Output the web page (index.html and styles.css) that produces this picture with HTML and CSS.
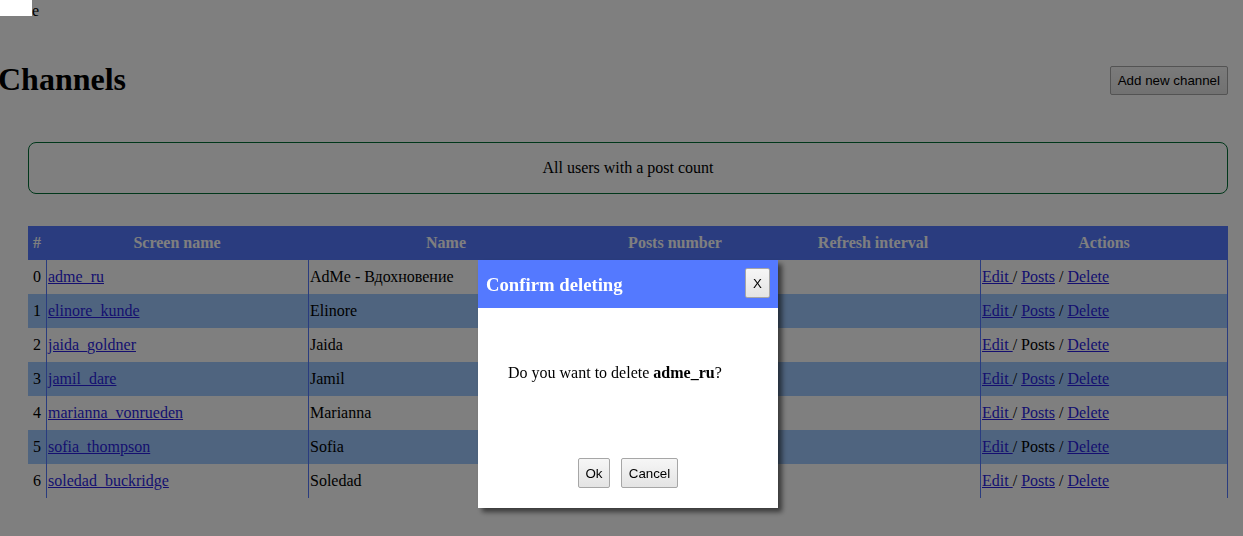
FILE: index.html
```html
<!DOCTYPE html>
<html lang="en">
<head>
<meta charset="utf-8">
<title>Channels</title>
<link rel="stylesheet" href="styles.css">
</head>
<body>
<div class="topline">Home</div>
<div class="corner-box"></div>
<main class="page">
  <header class="page-header">
    <h1 class="title">Channels</h1>
    <button class="btn btn-add">Add new channel</button>
  </header>
  <div class="content">
    <div class="info">All users with a post count</div>
    <table class="channels">
      <colgroup>
        <col class="c-num"><col class="c-screen"><col class="c-name"><col class="c-posts"><col class="c-refresh"><col class="c-actions">
      </colgroup>
      <thead>
        <tr><th>#</th><th>Screen name</th><th>Name</th><th>Posts number</th><th>Refresh interval</th><th>Actions</th></tr>
      </thead>
      <tbody>
        <tr><td>0</td><td><a href="#">adme_ru</a></td><td>AdMe - Вдохновение</td><td></td><td></td><td><a href="#">Edit </a>/ <a href="#">Posts</a> / <a href="#">Delete</a></td></tr>
        <tr><td>1</td><td><a href="#">elinore_kunde</a></td><td>Elinore</td><td></td><td></td><td><a href="#">Edit </a>/ <a href="#">Posts</a> / <a href="#">Delete</a></td></tr>
        <tr><td>2</td><td><a href="#">jaida_goldner</a></td><td>Jaida</td><td></td><td></td><td><a href="#">Edit </a>/ Posts / <a href="#">Delete</a></td></tr>
        <tr><td>3</td><td><a href="#">jamil_dare</a></td><td>Jamil</td><td></td><td></td><td><a href="#">Edit </a>/ <a href="#">Posts</a> / <a href="#">Delete</a></td></tr>
        <tr><td>4</td><td><a href="#">marianna_vonrueden</a></td><td>Marianna</td><td></td><td></td><td><a href="#">Edit </a>/ <a href="#">Posts</a> / <a href="#">Delete</a></td></tr>
        <tr><td>5</td><td><a href="#">sofia_thompson</a></td><td>Sofia</td><td></td><td></td><td><a href="#">Edit </a>/ Posts / <a href="#">Delete</a></td></tr>
        <tr><td>6</td><td><a href="#">soledad_buckridge</a></td><td>Soledad</td><td></td><td></td><td><a href="#">Edit </a>/ <a href="#">Posts</a> / <a href="#">Delete</a></td></tr>
      </tbody>
    </table>
  </div>
</main>
<div class="overlay"></div>
<div class="modal">
  <div class="modal-header">
    <h3 class="modal-title">Confirm deleting</h3>
    <button class="btn btn-close">X</button>
  </div>
  <div class="modal-body">
    <p class="modal-text">Do you want to delete <b>adme_ru</b>?</p>
    <div class="modal-actions">
      <button class="btn btn-modal btn-ok">Ok</button>
      <button class="btn btn-modal btn-cancel">Cancel</button>
    </div>
  </div>
</div>
</body>
</html>
```

FILE: styles.css
```css
html, body {
  margin: 0;
  padding: 0;
  background: #ffffff;
  color: #000000;
  font-family: "Liberation Serif", "Times New Roman", serif;
  font-size: 16px;
}

.topline {
  line-height: 18.4px;
  padding-top: 2px;
}

.corner-box {
  position: absolute;
  left: 0;
  top: 0;
  width: 32px;
  height: 16px;
  background: #ffffff;
  z-index: 30;
}

.page-header {
  display: flex;
  justify-content: space-between;
  align-items: center;
  margin-top: 19.44px;
  padding-right: 15px;
}

.title {
  font-size: 32px;
  font-weight: bold;
  margin: 21.44px 0 21.44px -2px;
  line-height: 36.8px;
}

.btn {
  font-family: "Liberation Sans", Arial, sans-serif;
  font-size: 13.33px;
  color: #000000;
  background: linear-gradient(#f6f6f6, #e4e4e4);
  border: 1px solid #a6a6a6;
  border-radius: 2px;
  padding: 0 7px;
  margin: 0;
  cursor: pointer;
}

.btn-add {
  height: 29px;
  margin-top: 2px;
}

.content {
  margin: 0 15px 0 28px;
}

.info {
  margin-top: 22.5px;
  border: 1px solid #006e34;
  border-radius: 8px;
  padding: 15.5px 0 16px;
  line-height: 18.4px;
  text-align: center;
}

.channels {
  margin-top: 32px;
  width: 1200px;
  table-layout: fixed;
  border-collapse: separate;
  border-spacing: 0;
}

.c-num { width: 18px; }
.c-screen { width: 262px; }
.c-name { width: 276px; }
.c-posts { width: 182px; }
.c-refresh { width: 214px; }
.c-actions { width: 248px; }

.channels tr {
  height: 34px;
}

.channels th {
  background: #5479ff;
  color: #ffffff;
  font-weight: bold;
  text-align: center;
  padding: 0;
}

.channels td {
  padding: 0 1px;
  vertical-align: middle;
  white-space: nowrap;
}

.channels td:first-child {
  text-align: center;
  padding: 0;
}

.channels td + td {
  border-left: 1px solid #5479ff;
}

.channels td:last-child {
  border-right: 1px solid #5479ff;
}

.channels tbody tr:nth-child(even) {
  background: #9fc9ff;
}

.channels a {
  color: #2a1ee0;
}

.overlay {
  position: fixed;
  inset: 0;
  background: rgba(0, 0, 0, 0.5);
  z-index: 10;
}

.modal {
  position: fixed;
  left: 478px;
  top: 260px;
  width: 300px;
  height: 248px;
  background: #ffffff;
  box-shadow: 4px 4px 5px rgba(0, 0, 0, 0.55);
  z-index: 20;
  display: flex;
  flex-direction: column;
}

.modal-header {
  height: 48px;
  background: #5479ff;
  display: flex;
  align-items: center;
  justify-content: space-between;
  padding: 0 8px;
}

.modal-title {
  margin: 0;
  padding-top: 2px;
  color: #ffffff;
  font-size: 18.72px;
  font-weight: bold;
  line-height: 21.5px;
}

.btn-close {
  height: 30px;
  width: 25px;
  padding: 0;
  margin-top: -2px;
}

.modal-body {
  flex: 1;
  display: flex;
  flex-direction: column;
  padding: 56px 30px 20px;
}

.modal-text {
  margin: 0;
  line-height: 18.4px;
}

.modal-actions {
  margin-top: auto;
  display: flex;
  justify-content: center;
  gap: 11px;
}

.btn-modal {
  height: 30px;
  padding: 0;
}

.btn-ok {
  width: 32px;
}

.btn-cancel {
  width: 57px;
}
```
